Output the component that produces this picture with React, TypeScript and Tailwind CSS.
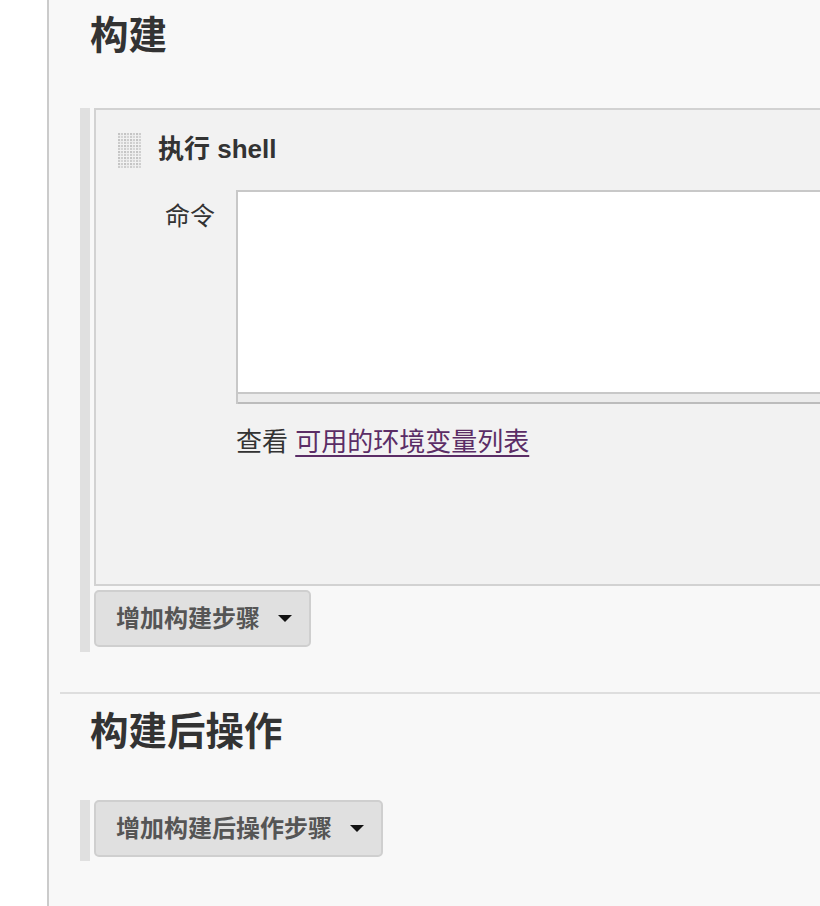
import React from "react";

const FONT = "font-['Liberation_Sans','Noto_Sans_CJK_SC',sans-serif]";

/* drag handle — grid of dotted squares */
function DragHandle() {
  const cells: React.ReactNode[] = [];
  for (let r = 0; r < 6; r++) {
    for (let c = 0; c < 4; c++) {
      const x = c * 6;
      const y = r * 6;
      cells.push(
        <g key={`${r}-${c}`}>
          <rect x={x} y={y} width={5} height={5} fill="#ececec" />
          <rect x={x} y={y} width={2} height={2} fill="#c4c4c4" />
          <rect x={x + 3} y={y} width={2} height={2} fill="#cdcdcd" />
          <rect x={x} y={y + 3} width={2} height={2} fill="#cdcdcd" />
          <rect x={x + 3} y={y + 3} width={2} height={2} fill="#d6d6d6" />
        </g>
      );
    }
  }
  return (
    <svg width="24" height="36" viewBox="0 0 24 36" className="shrink-0">
      {cells}
    </svg>
  );
}

function Caret() {
  return (
    <svg width="14" height="7" viewBox="0 0 14 7" className="shrink-0">
      <polygon points="0,0 14,0 7,7" fill="#111" />
    </svg>
  );
}

function AddButton({ label }: { label: string }) {
  return (
    <button className="flex items-center h-[57px] pl-[20px] pr-[17px] gap-[18px] bg-[#e0e0e0] border-2 border-[#cfcfcf] rounded-[5px] text-[24px] font-bold text-[#555]">
      <span>{label}</span>
      <Caret />
    </button>
  );
}

export default function App() {
  return (
    <div className={`flex w-[820px] h-[906px] overflow-hidden bg-white text-[#333] ${FONT}`}>
      {/* left gutter */}
      <div className="w-[49px] shrink-0 border-r-2 border-[#cbcbcb] bg-white" />

      <main className="flex-1 bg-[#f8f8f8] pl-[11px]">
        {/* ---- 构建 ---- */}
        <h2 className="pl-[30px] mt-[13px] text-[38.5px] leading-[46px] font-bold text-[#333]">构建</h2>

        <div className="flex ml-[20px] mt-[49px]">
          <div className="w-[10px] shrink-0 bg-[#e0e0e0]" />
          <div className="flex-1 ml-[4px] pb-[5px]">
            {/* step panel */}
            <div className="bg-[#f2f2f2] border-y-2 border-l-2 border-[#d2d2d2] pb-[124px]">
              <div className="flex items-center h-[36px] mt-[23px] pl-[22px] gap-[16px]">
                <DragHandle />
                <span className="text-[26px] font-bold text-[#333] -mt-[3px]">执行 shell</span>
              </div>

              <div className="flex mt-[21px]">
                <label className="w-[119px] shrink-0 text-right pt-[8px] text-[25px] leading-[36px] text-[#333]">
                  命令
                </label>
                <div className="ml-[21px] flex-1">
                  <div className="border-l-2 border-t-2 border-[#c8c8c8]">
                    <div className="h-[200px] bg-white" />
                    <div className="h-[2px] bg-[#c8c8c8]" />
                    <div className="h-[8px] bg-[#ececec]" />
                    <div className="h-[2px] bg-[#bcbcbc]" />
                  </div>
                  <p className="mt-[20px] text-[26px] leading-[36px] text-[#333]">
                    查看 <a href="#" className="text-[#5b2d66] underline underline-offset-[4px]">可用的环境变量列表</a>
                  </p>
                </div>
              </div>
            </div>

            <div className="mt-[4px] flex">
              <AddButton label="增加构建步骤" />
            </div>
          </div>
        </div>

        {/* separator */}
        <div className="mt-[40px] h-[2px] bg-[#dedede]" />

        {/* ---- 构建后操作 ---- */}
        <h2 className="pl-[30px] mt-[15px] text-[38.5px] leading-[46px] font-bold text-[#333]">构建后操作</h2>

        <div className="flex ml-[20px] mt-[45px]">
          <div className="w-[10px] shrink-0 bg-[#e0e0e0]" />
          <div className="ml-[4px] pb-[4px]">
            <AddButton label="增加构建后操作步骤" />
          </div>
        </div>
      </main>
    </div>
  );
}
